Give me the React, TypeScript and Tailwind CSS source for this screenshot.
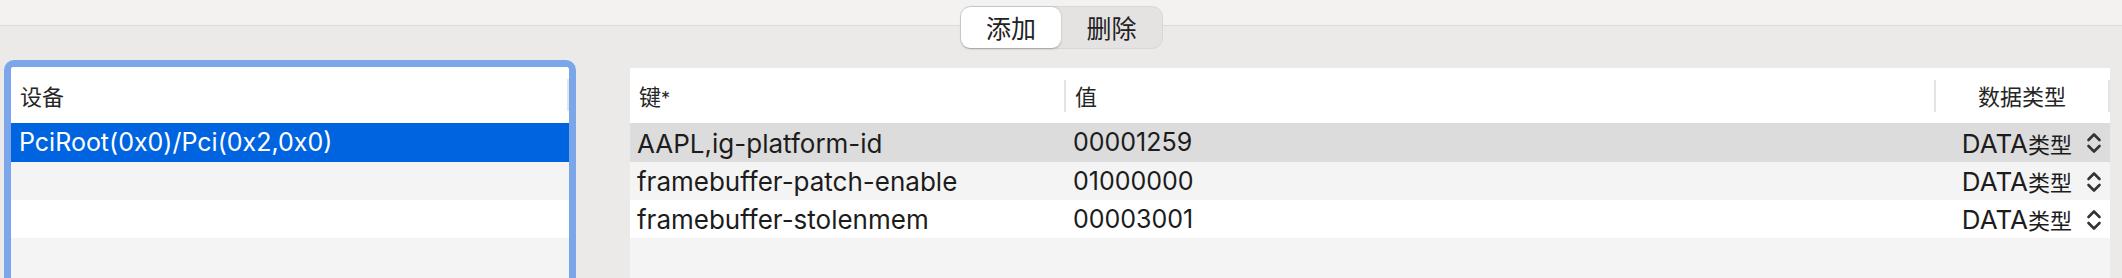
import React from "react";

const LATIN = "font-['Inter','Noto_Sans_CJK_SC',sans-serif]";
const CJK = "font-['Noto_Sans_CJK_SC',sans-serif]";

function Chevrons() {
  return (
    <svg
      width="16"
      height="24"
      viewBox="0 0 16 24"
      fill="none"
      stroke="#333333"
      strokeWidth="2.6"
      strokeLinecap="round"
      strokeLinejoin="round"
    >
      <path d="M2.5 9 L8 3.5 L13.5 9" />
      <path d="M2.5 15 L8 20.5 L13.5 15" />
    </svg>
  );
}

const rows = [
  { k: "AAPL,ig-platform-id", v: "00001259", bg: "bg-[#dcdcdc]", h: "h-[39px]" },
  { k: "framebuffer-patch-enable", v: "01000000", bg: "bg-[#f4f4f4]", h: "h-[38px]" },
  { k: "framebuffer-stolenmem", v: "00003001", bg: "bg-white", h: "h-[38px]" },
];

function Sep() {
  return <div className="w-[2px] h-[32px] bg-[#e4e4e4] shrink-0" />;
}

export default function App() {
  return (
    <div className="w-[2122px] h-[278px] overflow-hidden bg-[#ebeae9] flex flex-col text-[#1c1c1c]">
      {/* toolbar */}
      <div className="relative h-[26px] shrink-0 bg-[#f3f2f1] border-b border-[#dddcdb]">
        <div className="absolute left-[960px] top-[6px] w-[203px] h-[43px] rounded-[11px] bg-[#e4e3e2] border border-[#d8d7d6] flex z-10">
          <div
            className={`w-[100px] h-full rounded-[9px] bg-white shadow-[0_0.5px_2px_rgba(0,0,0,0.28)] flex items-center justify-center text-[25px] text-[#222] ${CJK}`}
          >
            添加
          </div>
          <div className={`flex-1 flex items-center justify-center text-[25px] text-[#222] ${CJK}`}>
            删除
          </div>
        </div>
      </div>

      {/* body */}
      <div className="flex flex-1 min-h-0">
        {/* left device list with focus ring */}
        <div className="ml-[4px] mt-[34px] w-[572px] shrink-0 border-[7px] border-b-0 border-[#7ba7ea] rounded-t-[10px] bg-white flex flex-col overflow-hidden">
          <div className="h-[56px] shrink-0 flex items-center bg-white">
            <div className={`flex-1 pl-[9px] text-[22px] text-[#262626] ${CJK}`}>设备</div>
            <Sep />
          </div>
          <div className={`h-[39px] shrink-0 bg-[#0064e1] text-white flex items-center pl-[8px] pt-[1px] text-[25px] ${LATIN}`}>
            PciRoot(0x0)/Pci(0x2,0x0)
          </div>
          <div className="h-[38px] shrink-0 bg-[#f4f4f4]" />
          <div className="h-[38px] shrink-0 bg-white" />
          <div className="flex-1 bg-[#f4f4f4]" />
        </div>

        {/* right property table */}
        <div className="ml-[54px] mt-[42px] w-[1480px] shrink-0 flex flex-col">
          <div className="h-[55px] shrink-0 bg-white flex items-center">
            <div className="w-[434px] shrink-0 pl-[9px] flex items-baseline text-[#262626]">
              <span className={`text-[22px] ${CJK}`}>键</span>
              <span className={`text-[18px] ${LATIN}`}>*</span>
            </div>
            <Sep />
            <div className={`w-[868px] shrink-0 pl-[9px] text-[22px] text-[#262626] ${CJK}`}>值</div>
            <Sep />
            <div className={`w-[172px] shrink-0 text-center text-[22px] text-[#262626] ${CJK}`}>数据类型</div>
            <Sep />
          </div>
          {rows.map((r) => (
            <div key={r.k} className={`${r.h} shrink-0 ${r.bg} flex items-center pt-[1px]`}>
              <div className={`w-[436px] shrink-0 pl-[7px] text-[26px] ${LATIN}`}>{r.k}</div>
              <div className={`w-[868px] shrink-0 pl-[7px] text-[25px] ${LATIN}`}>{r.v}</div>
              <div className="w-[176px] shrink-0 flex items-center justify-end gap-[14px] pr-[8px]">
                <span className="flex items-baseline">
                  <span className={`text-[26px] ${LATIN}`}>DATA</span>
                  <span className={`text-[22px] ${CJK}`}>类型</span>
                </span>
                <Chevrons />
              </div>
            </div>
          ))}
          <div className="flex-1 bg-[#f4f4f4]" />
        </div>
      </div>
    </div>
  );
}
